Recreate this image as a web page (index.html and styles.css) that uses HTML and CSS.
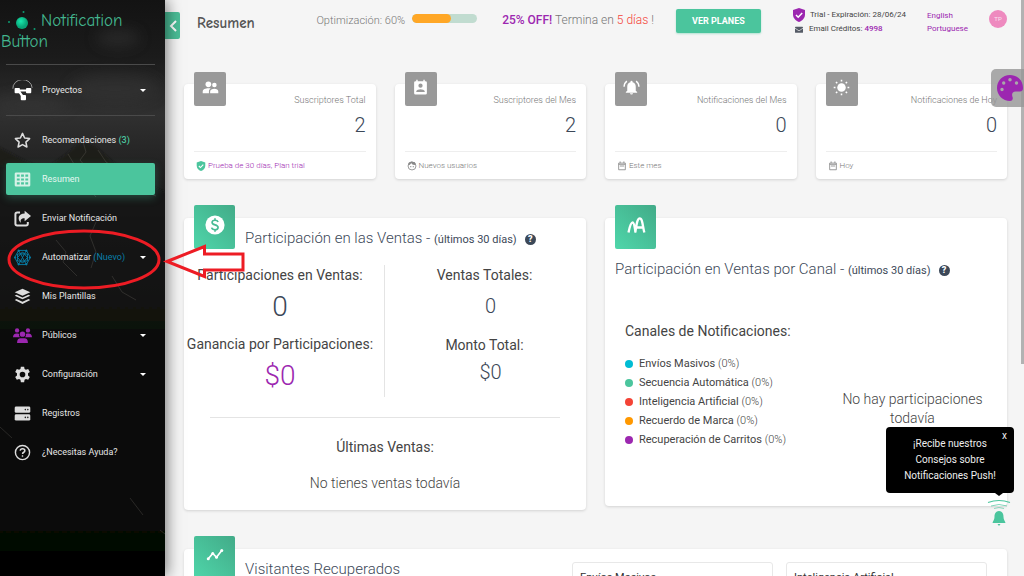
FILE: index.html
```html
<!DOCTYPE html>
<html lang="es">
<head>
<meta charset="utf-8">
<meta name="viewport" content="width=device-width, initial-scale=1">
<title>Resumen - Notification Button</title>
<link rel="stylesheet" href="styles.css">
</head>
<body>
<div class="app">
  <aside class="sidebar">
    <svg class="scenery" viewBox="0 0 165 576" preserveAspectRatio="none" aria-hidden="true">
      <defs>
        <linearGradient id="rock" x1="0" y1="0" x2="0" y2="1"><stop offset="0" stop-color="#1b1b1a"/><stop offset="1" stop-color="#040504"/></linearGradient>
        <filter id="soft"><feGaussianBlur stdDeviation="7"/></filter>
        <filter id="edge"><feGaussianBlur stdDeviation=".8"/></filter>
      </defs>
      <g filter="url(#soft)" fill="#3a3a3a" opacity=".45"><ellipse cx="115" cy="88" rx="45" ry="14"/><ellipse cx="30" cy="104" rx="40" ry="9"/><ellipse cx="118" cy="38" rx="22" ry="9"/></g>
      <path d="M-5 145l30 16 20 8 20-14 18-15 12 6 18 16 25 18 32 14v392H-5z" fill="url(#rock)" filter="url(#edge)" opacity=".8"/>
      <g fill="none" stroke="#6b6963" stroke-width=".7" opacity=".45"><path d="M83 142l3 10-6 8 10 12-5 12 11 13M68 154l6 10-8 10 8 11M45 168l9 9-4 8M98 150l8 12 12 8 4 13M130 180l10 10 16 6M56 240l10 12-3 10 14 14M96 222l-6 14 6 16-5 16M112 276l10 16 14 8M0 427l12 11M130 498l13 17M160 530l5 4"/></g>
    </svg>
    <a class="brand" href="#">
      <svg class="brand-mark" viewBox="0 0 40 28" aria-hidden="true"><defs><radialGradient id="orb" cx=".4" cy=".35"><stop offset="0" stop-color="#19e8ad"/><stop offset="1" stop-color="#08a477"/></radialGradient></defs><circle cx="21" cy="13" r="6" fill="url(#orb)"/><g fill="#0d9c72"><circle cx="22.500" cy="2" r="1"/><circle cx="8" cy="12" r="1"/><circle cx="33.500" cy="19" r="1"/><circle cx="19" cy="25" r="1"/></g></svg><span>Notification<br>Button</span>
    </a>
    <div class="project">
      <a class="nav-link" href="#">
        <svg class="nav-icon" viewBox="0 0 24 24"><path d="M1 10a11 10 0 0 1 22-1" fill="none" stroke="#aaa" stroke-width="1"/><path d="M6 12h12M8 13l5 7" stroke="#fff" stroke-width="2.500"/><g fill="#fff"><rect x="3" y="9" width="6" height="6" rx="1"/><rect x="16" y="9" width="6" height="6" rx="1"/><rect x="10" y="17" width="6" height="6" rx="1"/></g></svg>
        <span>Proyectos</span><i class="caret"></i>
      </a>
    </div>
    <nav class="nav">
      <a class="nav-link" href="#"><svg class="nav-icon" viewBox="0 0 24 24"><path d="M12 2l3 6.500 7 .8-5.200 4.900 1.400 7L12 17.800l-6.200 3.400 1.400-7L2 9.300l7-.8z" fill="none" stroke="#ddd" stroke-width="2.200" stroke-linejoin="round"/></svg><span>Recomendaciones <b class="green">(3)</b></span></a>
      <a class="nav-link active" href="#"><svg class="nav-icon" viewBox="0 0 24 24"><path fill="#d6f1e7" fill-rule="evenodd" d="M3 2h18a2 2 0 0 1 2 2v16a2 2 0 0 1-2 2H3a2 2 0 0 1-2-2V4a2 2 0 0 1 2-2zm1 3v3h4V5zm6 0v3h4V5zm6 0v3h4V5zM4 10.500v3h4v-3zm6 0v3h4v-3zm6 0v3h4v-3zM4 16v3h4v-3zm6 0v3h4v-3zm6 0v3h4v-3z"/></svg><span>Resumen</span></a>
      <a class="nav-link" href="#"><svg class="nav-icon" viewBox="0 0 24 24"><path d="M8.500 3.500H4.500A2.500 2.500 0 0 0 2 6v13.500A2.500 2.500 0 0 0 4.500 22H17a2.500 2.500 0 0 0 2.500-2.500V17" fill="none" stroke="#ddd" stroke-width="2.800"/><path d="M15 1l9 7.500-9 7.500v-4.500c-5 0-6.500 2-5 7C4 13 6 5 15 5z" fill="#ddd"/></svg><span>Enviar Notificación</span></a>
      <a class="nav-link" href="#"><svg class="nav-icon" viewBox="0 0 24 24" fill="none" stroke="#087ea8" stroke-width="1.300"><path d="M6.500 2h11L23 12l-5.500 10h-11L1 12z"/><path d="M6.500 2l11 20M17.500 2l-11 20M5 7l14 0v10H5zM12 4l7 8-7 8-7-8z"/><g fill="#087ea8"><circle cx="6.500" cy="2.500" r="1"/><circle cx="17.500" cy="2.500" r="1"/><circle cx="22.500" cy="12" r="1"/><circle cx="17.500" cy="21.500" r="1"/><circle cx="6.500" cy="21.500" r="1"/><circle cx="1.500" cy="12" r="1"/></g></svg><span>Automatizar <em class="blue">(Nuevo)</em></span><i class="caret"></i></a>
      <a class="nav-link" href="#"><svg class="nav-icon" viewBox="0 0 24 24" fill="#ddd"><path d="M12 1l11 5-11 5L1 6z"/><path d="M3.500 9.500L12 13.300l8.500-3.800L23 11l-11 5L1 11z"/><path d="M3.500 15.500l8.500 3.800 8.500-3.800L23 17l-11 5.500L1 17z"/></svg><span>Mis Plantillas</span></a>
      <a class="nav-link" href="#"><svg class="nav-icon wide" viewBox="0 0 28 24" fill="#9c27b0"><circle cx="6" cy="4.500" r="3.200"/><circle cx="22" cy="4.500" r="3.200"/><circle cx="14" cy="10" r="4"/><path d="M0 14.500C0 11 2 9 5 9h2c1 0 1.500.3 2 .8-.5 2 .2 3.600 1.300 4.700zM28 14.500C28 11 26 9 23 9h-2c-1 0-1.500.3-2 .8.500 2-.2 3.600-1.300 4.700zM6 23c0-5 2-7 5-7h6c3 0 5 2 5 7z"/></svg><span>Públicos</span><i class="caret"></i></a>
      <a class="nav-link" href="#"><svg class="nav-icon" viewBox="0 0 24 24"><path fill="#ddd" fill-rule="evenodd" d="M9.700 1h4.600l.6 3.300 2 1.100 3.100-1.100 2.300 4-2.500 2.100v2.900l2.500 2.200-2.300 4-3.100-1.200-2 1.200-.6 3.300H9.700l-.6-3.300-2-1.200L4 19.500l-2.300-4 2.500-2.200v-2.900L1.700 8.300l2.300-4 3.100 1.100 2-1.100zM12 8a4 4 0 1 0 0 8 4 4 0 0 0 0-8z"/></svg><span>Configuración</span><i class="caret"></i></a>
      <a class="nav-link" href="#"><svg class="nav-icon" viewBox="0 0 24 24"><g fill="#ddd"><rect x="1" y="2" width="22" height="9" rx="2"/><rect x="1" y="13" width="22" height="9" rx="2"/></g><g fill="#222"><circle cx="16" cy="6.500" r="1.100"/><circle cx="19.500" cy="6.500" r="1.100"/><circle cx="16" cy="17.500" r="1.100"/><circle cx="19.500" cy="17.500" r="1.100"/></g></svg><span>Registros</span></a>
      <a class="nav-link" href="#"><svg class="nav-icon" viewBox="0 0 24 24" fill="none" stroke="#ddd"><circle cx="12" cy="12" r="10" stroke-width="2"/><path d="M8.700 9.500C9 7.500 10.300 6.600 12 6.600s3.300 1 3.300 2.800c0 2.200-3.200 2.300-3.200 4.600" stroke-width="2.200"/><circle cx="12" cy="17" r=".8" stroke-width="1.200"/></svg><span>¿Necesitas Ayuda?</span></a>
    </nav>
  </aside>

  <main class="main">
    <button class="collapse" aria-label="Contraer menú"><svg viewBox="0 0 10 16"><path d="M8 3L3 8l5 5" fill="none" stroke="#fff" stroke-width="2"/></svg></button>
    <header class="topbar">
      <h1>Resumen</h1>
      <div class="optim"><span>Optimización: 60%</span><div class="bar"><div class="bar-fill" style="width:60%"></div></div></div>
      <p class="offer"><b>25% OFF!</b> Termina en <span>5 días</span> !</p>
      <button class="plans">VER PLANES</button>
      <div class="account">
        <div><svg class="shield" viewBox="0 0 12 14"><path d="M6 0l6 2v4.500c0 3.500-2.500 6-6 7.500-3.500-1.500-6-4-6-7.500V2z" fill="#9c27b0"/><path d="M3 7l2.200 2.200L9.200 5" fill="none" stroke="#fff" stroke-width="1.500"/></svg><span>Trial - Expiración: 28/06/24</span></div>
        <div><svg class="mail" viewBox="0 0 12 10"><rect y="1" width="12" height="9" rx="1" fill="#555b66"/><path d="M0 3l6 4 6-4" fill="none" stroke="#f4f4f4"/></svg><span>Email Créditos: <b>4998</b></span></div>
      </div>
      <div class="langs"><a href="#">English</a><a href="#">Portuguese</a></div>
      <div class="avatar">TP</div>
    </header>

    <section class="stats">
      <article class="card stat">
        <div class="tile grey"><svg viewBox="0 0 24 24" fill="#fff"><circle cx="9" cy="7.500" r="4"/><circle cx="17.500" cy="8.500" r="3.200"/><path d="M1 20v-2.500C1 14.500 5 13 9 13c1.200 0 2.300.1 3.300.4-2 1.200-2.500 2.600-2.500 4.100V20zM11.500 20v-2.500c0-2.500 3-3.800 6-3.800s5.500 1.300 5.500 3.800V20z"/></svg></div>
        <h2>Suscriptores Total</h2><p class="value">2</p>
        <footer class="trial"><svg viewBox="0 0 12 14"><path d="M6 0l6 2v4.500c0 3.500-2.500 6-6 7.500-3.500-1.500-6-4-6-7.500V2z" fill="#4bc59d"/><path d="M3 7l2.200 2.200L9.200 5" fill="none" stroke="#fff" stroke-width="1.500"/></svg>Prueba de 30 días, Plan trial</footer>
      </article>
      <article class="card stat">
        <div class="tile grey"><svg viewBox="0 0 24 24"><path fill="#fff" fill-rule="evenodd" d="M19 3h-1V1h-2v2H8V1H6v2H5a2 2 0 0 0-2 2v15a2 2 0 0 0 2 2h14a2 2 0 0 0 2-2V5a2 2 0 0 0-2-2zm-7 3.500a3 3 0 1 1 0 6 3 3 0 0 1 0-6zM18 18.500H6v-1c0-2 4-3.200 6-3.200s6 1.200 6 3.200z"/></svg></div>
        <h2>Suscriptores del Mes</h2><p class="value">2</p>
        <footer><svg viewBox="0 0 24 24"><circle cx="12" cy="12" r="9.500" fill="none" stroke="#888" stroke-width="2"/><path d="M3 10c4 0 6-2 7-5 2 4 6 5 11 4L19 3 10 1 4 4z" fill="#888"/><g fill="#888"><circle cx="9" cy="13.500" r="1.500"/><circle cx="15" cy="13.500" r="1.500"/></g></svg>Nuevos usuarios</footer>
      </article>
      <article class="card stat">
        <div class="tile grey"><svg viewBox="0 0 24 24" fill="#fff"><path d="M12 22a2.200 2.200 0 0 0 2.200-2H9.800A2.200 2.200 0 0 0 12 22zM18 16.500V11c0-3.200-1.600-5.700-4.500-6.300V4a1.500 1.500 0 0 0-3 0v.7C7.600 5.300 6 7.800 6 11v5.500l-2 2v1h16v-1z"/><path d="M5.500 3C3 4.700 1.700 7.300 1.500 11M18.500 3c2.500 1.700 3.800 4.300 4 8" fill="none" stroke="#fff" stroke-width="2"/></svg></div>
        <h2>Notificaciones del Mes</h2><p class="value">0</p>
        <footer><svg viewBox="0 0 24 24"><path d="M4 5h16v16H4zM4 8h16" fill="none" stroke="#888" stroke-width="2"/><path d="M7.500 1v4M16.500 1v4M7 12h10" stroke="#888" stroke-width="2"/></svg>Este mes</footer>
      </article>
      <article class="card stat">
        <div class="tile grey"><svg viewBox="0 0 24 24"><circle cx="12" cy="12" r="6" fill="#fff"/><path d="M12 1v2.500M12 20.500V23M1 12h2.500M20.500 12H23M4.200 4.200L6 6M18 18l1.800 1.800M4.200 19.800L6 18M18 6l1.800-1.800" stroke="#fff" stroke-width="2.200"/></svg></div>
        <h2>Notificaciones de Hoy</h2><p class="value">0</p>
        <footer><svg viewBox="0 0 24 24"><path d="M4 5h16v16H4zM4 8h16" fill="none" stroke="#888" stroke-width="2"/><path d="M7.500 1v4M16.500 1v4M7 12h10" stroke="#888" stroke-width="2"/></svg>Hoy</footer>
      </article>
    </section>

    <section class="panels">
      <article class="card">
        <div class="head">
          <div class="tile green-tile"><svg viewBox="0 0 24 24"><circle cx="12" cy="12" r="11.500" fill="#fff"/><path d="M15.700 8.500c-.5-1.500-1.900-2.200-3.700-2.200-2 0-3.500 1-3.500 2.700 0 3.800 7.200 2 7.200 6 0 1.700-1.600 2.700-3.700 2.700s-3.600-.9-4-2.500M12 3.800v2.500M12 17.700v2.500" fill="none" stroke="#48bb95" stroke-width="2"/></svg></div>
          <h2>Participación en las Ventas - <small>(últimos 30 días)</small><button class="help" aria-label="Ayuda">?</button></h2>
        </div>
        <div class="sales">
          <div class="sales-col">
            <h3>Participaciones en Ventas:</h3><p class="big">0</p>
            <h3>Ganancia por Participaciones:</h3><p class="big money">$0</p>
          </div>
          <div class="sales-col">
            <h3>Ventas Totales:</h3><p class="mid">0</p>
            <h3>Monto Total:</h3><p class="mid">$0</p>
          </div>
        </div>
        <div class="latest"><h3>Últimas Ventas:</h3><p>No tienes ventas todavía</p></div>
      </article>

      <article class="card">
        <div class="head stacked">
          <div class="tile green-tile"><svg viewBox="0 0 24 24"><path d="M3 21c1-5 2.500-12 5-12 2 0 2.500 7 3.500 12M11 21c1.500-7 2-17 5.500-17S20 14 22 21M12 15h8" fill="none" stroke="#fff" stroke-width="2.800" stroke-linejoin="round"/></svg></div>
          <h2>Participación en Ventas por Canal - <small>(últimos 30 días)</small><button class="help" aria-label="Ayuda">?</button></h2>
        </div>
        <div class="channels">
          <div>
            <h3>Canales de Notificaciones:</h3>
            <ul>
              <li class="c-cyan">Envíos Masivos <span>(0%)</span></li>
              <li class="c-green">Secuencia Automática <span>(0%)</span></li>
              <li class="c-red">Inteligencia Artificial <span>(0%)</span></li>
              <li class="c-orange">Recuerdo de Marca <span>(0%)</span></li>
              <li class="c-purple">Recuperación de Carritos <span>(0%)</span></li>
            </ul>
          </div>
          <p class="empty">No hay participaciones todavía</p>
        </div>
      </article>
    </section>

    <section class="card visitors">
      <div class="head">
        <div class="tile green-tile"><svg class="trend" viewBox="0 0 24 24"><path d="M3 17l6-7 5 5 7-9" fill="none" stroke="#fff" stroke-width="2.200"/><g fill="#fff"><circle cx="3" cy="17" r="2"/><circle cx="9" cy="10" r="2"/><circle cx="14" cy="15" r="2"/><circle cx="21" cy="6" r="2"/></g></svg></div>
        <h2>Visitantes Recuperados</h2>
      </div>
      <div class="box">Envíos Masivos</div>
      <div class="box">Inteligencia Artificial</div>
    </section>
  </main>

  <div class="scrollbar"></div>
  <button class="palette" aria-label="Colores"><svg viewBox="0 0 26 26"><path fill="#9c27b0" fill-rule="evenodd" d="M13 0C5.500 0 0 5.700 0 13s5.800 13 13 13c2.200 0 3.300-2 2.600-3.800-1.200-3-.3-5.700 3-5.700H23c2 0 3-1.300 3-3.500C26 5.500 20.500 0 13 0zM5 16.200a1.700 1.700 0 1 1 0-3.400 1.700 1.700 0 0 1 0 3.400zm1.700-6.500a1.700 1.700 0 1 1 0-3.400 1.700 1.700 0 0 1 0 3.400zM13 6.500A1.700 1.700 0 1 1 13 3a1.700 1.700 0 0 1 0 3.500zm6.500 3.200a1.700 1.700 0 1 1 0-3.400 1.700 1.700 0 0 1 0 3.400z"/></svg></button>
  <div class="tip"><button aria-label="Cerrar">x</button><p>¡Recibe nuestros Consejos sobre Notificaciones Push!</p></div>
  <button class="bell" aria-label="Notificaciones"><svg viewBox="0 0 24 28"><g fill="none" stroke="#4bc59d"><path d="M1 3.500q11-4 22 0" stroke-width="1.200"/><path d="M4 7q8-3 16 0" opacity=".7"/><path d="M7 9.500q5-2 10 0" opacity=".6"/></g><path d="M12 12c-4 .5-4.500 3.500-4.500 6 0 3-1.500 3.500-2 6h13c-.5-2.500-2-3-2-6 0-2.500-.5-5.500-4.500-6zM10.500 25h3L12 27z" fill="#4bc59d"/></svg></button>
  <svg class="markup" viewBox="0 0 250 70" fill="none" stroke="#ed1c24" aria-hidden="true"><ellipse cx="84" cy="34.500" rx="75" ry="28.500" stroke-width="3"/><path d="M167 36.500L204.500 21.500V29H243V45H204.500V51.500z" stroke-width="3"/></svg>
</div>
</body>
</html>
```
FILE: styles.css
```css
* { box-sizing: border-box; }
body { margin: 0; background: #f5f5f5; color: #3c4858; font-family: Roboto, "Liberation Sans", sans-serif; font-size: 10px; }
h1, h2, h3, p, ul { margin: 0; padding: 0; }
h1, h2, h3 { font-weight: 400; }
a { text-decoration: none; color: inherit; }
button { border: 0; padding: 0; font-family: inherit; cursor: pointer; }
svg { display: block; flex: none; }

.app { position: relative; display: flex; height: 100vh; overflow: hidden; }

.sidebar { position: relative; flex: none; width: 165px; padding: 10px 10px 0 6px; color: #e6e6e6;
  background: linear-gradient(#131313 0, #1b1b1b 10%, #303030 20%, #262626 26%, #121212 40%, #050605 60%, #030403 100%);
  box-shadow: 2px 0 14px rgba(0,0,0,.5); z-index: 1; }
.scenery { position: absolute; inset: 0; width: 100%; height: 100%; }
.brand, .project, .nav { position: relative; }
.brand { display: block; margin-left: -6px; padding-left: 1px; font: 400 17px/21px "Comic Sans MS", "Comic Neue", "Noto Sans", sans-serif; color: #43b68f; white-space: nowrap; }
.brand-mark { display: inline-block; width: 40px; height: 28px; margin: -4px 0 -8px; vertical-align: middle; }
.project { margin: 12px 0 8px; padding: 9px 0; border: solid #4a4a4a; border-width: 1px 0; font-size: 9px; }
.nav { display: grid; gap: 7px; font-size: 9px; }
.nav-link { display: flex; align-items: center; height: 32px; padding: 0 9px 0 8px; border-radius: 2px; }
.nav-link > span { margin-left: 11px; line-height: 14px; }
.nav-icon { width: 17px; height: 17px; }
.nav-icon.wide { width: 19px; margin: 0 -1px; }
.project .nav-icon { width: 21px; height: 21px; margin: 0 -2px; }
.active { background: #4bc59d; color: #e5f7f1; box-shadow: 0 3px 8px rgba(75,197,157,.3); }
.green { color: #4bc59d; font-weight: 500; }
.blue { color: #087ea8; font-style: normal; }
.caret { margin-left: auto; border: solid transparent; border-width: 3px 3px 0; border-top-color: #fff; }

.main { position: relative; flex: 1; min-width: 0; padding: 0 17px 0 19px; }
.collapse { position: absolute; left: 0; top: 12px; width: 15px; height: 27px; background: #4bbd97; border-radius: 0 2px 2px 0; }
.collapse svg { width: 10px; height: 16px; margin: 0 auto; }

.topbar { display: flex; align-items: center; height: 44px; margin-bottom: 40px; padding-left: 13px; color: #777; }
.topbar h1 { margin-right: auto; padding-top: 2px; font: 700 15px/20px "Comic Sans MS", "Comic Neue", "Noto Sans", sans-serif; color: #555; }
.optim { display: flex; align-items: center; gap: 7px; height: 34px; padding-bottom: 4px; font-size: 11px; font-weight: 300; }
.bar { width: 65px; height: 9px; margin-top: -4px; border-radius: 5px; overflow: hidden; background: #c1dcd0; }
.bar-fill { height: 100%; border-radius: 5px; background: #ffa726; }
.offer { margin-left: 25px; padding-bottom: 5px; font-size: 12px; font-weight: 300; }
.offer b { color: #9c27b0; font-weight: 500; }
.offer span { color: #f44336; }
.plans { width: 85px; height: 24px; margin: 0 0 2px 22px; border-radius: 2px; background: #4bc59d; color: #fff; font-size: 9px; font-weight: 700; box-shadow: 0 1px 2px rgba(75,197,157,.4); }
.account { margin-left: 32px; font-size: 8px; line-height: 14px; color: #444; }
.account div { display: flex; align-items: center; gap: 5px; }
.account b { color: #9c27b0; font-weight: 500; }
.shield { width: 12px; height: 14px; }
.mail { width: 8px; height: 7px; margin: 0 1px 0 2px; }
.langs { display: grid; margin-left: 21px; font-size: 8px; line-height: 13px; color: #9c27b0; }
.avatar { width: 18px; height: 18px; margin: 0 0 6px 21px; border-radius: 50%; background: #ee8abf; color: #fbe3f0; font-size: 6px; line-height: 18px; text-align: center; }

.card { background: #fff; border-radius: 4px; box-shadow: 0 1px 3px rgba(0,0,0,.14); }
.tile { display: flex; justify-content: center; border-radius: 2px; }
.grey { background: #999; }
.stats { display: grid; grid-template-columns: repeat(4, 1fr); gap: 19px; }
.stat { position: relative; padding: 9px 10px 0; text-align: right; font-weight: 300; }
.stat .tile { position: absolute; left: 10px; top: -12px; width: 32px; height: 34px; padding-top: 7px; }
.stat .tile svg { width: 17px; height: 17px; }
.stat h2 { font-size: 9px; line-height: 14px; font-weight: 300; color: #777; }
.value { height: 44px; padding-top: 5px; font-size: 20px; line-height: 26px; }
.stat footer { display: flex; align-items: center; gap: 2px; height: 28px; padding-left: 2px; border-top: 1px solid #eee; font-size: 8px; color: #777; }
.stat footer svg { width: 10px; height: 10px; }
.stat .trial { color: #9c27b0; }

.panels { display: grid; grid-template-columns: 1fr 1fr; align-items: start; gap: 19px; margin-top: 39px; }
.head { display: flex; gap: 10px; padding: 0 10px; }
.head h2 { padding-top: 10px; font-size: 15px; line-height: 20px; font-weight: 300; }
.head small { font-size: 11px; font-weight: 400; }
.green-tile { flex: none; width: 41px; height: 44px; margin-top: -13px; padding-top: 10px; background: linear-gradient(45deg, #4fd6aa, #42ab88); }
.green-tile svg { width: 20px; height: 20px; }
.green-tile .trend { width: 18px; height: 18px; }
.stacked { display: block; }
.help { width: 11px; height: 11px; margin-left: 8px; border-radius: 50%; background: #3c4858; color: #fff; font-size: 9px; font-weight: 900; line-height: 11px; vertical-align: 1px; }
h3 { font-size: 14px; line-height: 20px; color: #444; }
.sales { display: grid; grid-template-columns: 1fr 1fr; margin-top: 15px; text-align: center; font-weight: 300; }
.sales-col { height: 132px; white-space: nowrap; }
.sales-col:first-child { border-right: 1px solid #e4e4e4; padding-right: 8px; }
.sales-col:last-child { padding-left: 10px; }
.sales-col:last-child h3 { padding-right: 12px; }
.big { height: 49px; padding-top: 4px; font-size: 28px; line-height: 36px; }
.money { color: #9c27b0; }
.mid { height: 50px; padding-top: 8px; font-size: 20px; line-height: 26px; }
.mid:last-child { padding-top: 4px; }
.latest { margin: 20px 26px 0; padding: 19px 0 17px; border-top: 1px solid #e4e4e4; text-align: center; }
.latest p { margin-top: 16px; font-size: 14px; line-height: 20px; font-weight: 300; color: #444; }
.channels { display: grid; grid-template-columns: 1fr 1fr; padding: 40px 20px 57px; }
.channels ul { margin-top: 13px; list-style: none; font-size: 11px; line-height: 19px; white-space: nowrap; color: #444; }
.channels li::before { content: ""; display: inline-block; width: 8px; height: 8px; margin-right: 6px; border-radius: 50%; background: var(--dot); vertical-align: -1px; }
.channels li span { font-weight: 300; }
.c-cyan { --dot: #00bcd4; }
.c-green { --dot: #4bc59d; }
.c-red { --dot: #f44336; }
.c-orange { --dot: #ff9800; }
.c-purple { --dot: #9c27b0; }
.empty { padding: 69px 0 0 32px; font-size: 14px; line-height: 19px; font-weight: 300; color: #444; text-align: center; }
.visitors { display: flex; gap: 13px; margin-top: 39px; padding-right: 20px; }
.visitors .head { flex: 1; }
.box { width: 201px; height: 60px; margin-top: 13px; padding: 8px 7px; border: 1px solid #e8e8e8; border-radius: 3px; font-size: 11px; color: #333; }

.scrollbar { position: absolute; right: 0; top: 0; width: 3px; height: 364px; background: #b2b2b2; }
.palette { position: absolute; right: 0; top: 69px; z-index: 2; width: 33px; height: 38px; padding: 0 0 0 6px; border-radius: 5px 0 0 5px; background: rgba(150,150,150,.8); }
.palette svg { width: 26px; height: 26px; }
.tip { position: absolute; right: 10px; bottom: 83px; z-index: 2; width: 128px; padding: 9px 16px; border-radius: 4px; background: #000; color: #eee; font-size: 10px; line-height: 16px; text-align: center; }
.tip::after { content: ""; position: absolute; right: 11px; top: 100%; border: solid transparent; border-width: 3px 4px 0; border-top-color: #000; }
.tip button { position: absolute; right: 7px; top: 3px; background: none; color: #eee; font-size: 10px; line-height: 12px; }
.bell { position: absolute; right: 13px; bottom: 49px; z-index: 2; background: none; }
.bell svg { width: 24px; height: 28px; }
.markup { position: absolute; left: 0; top: 225px; z-index: 3; width: 250px; height: 70px; pointer-events: none; }
```
